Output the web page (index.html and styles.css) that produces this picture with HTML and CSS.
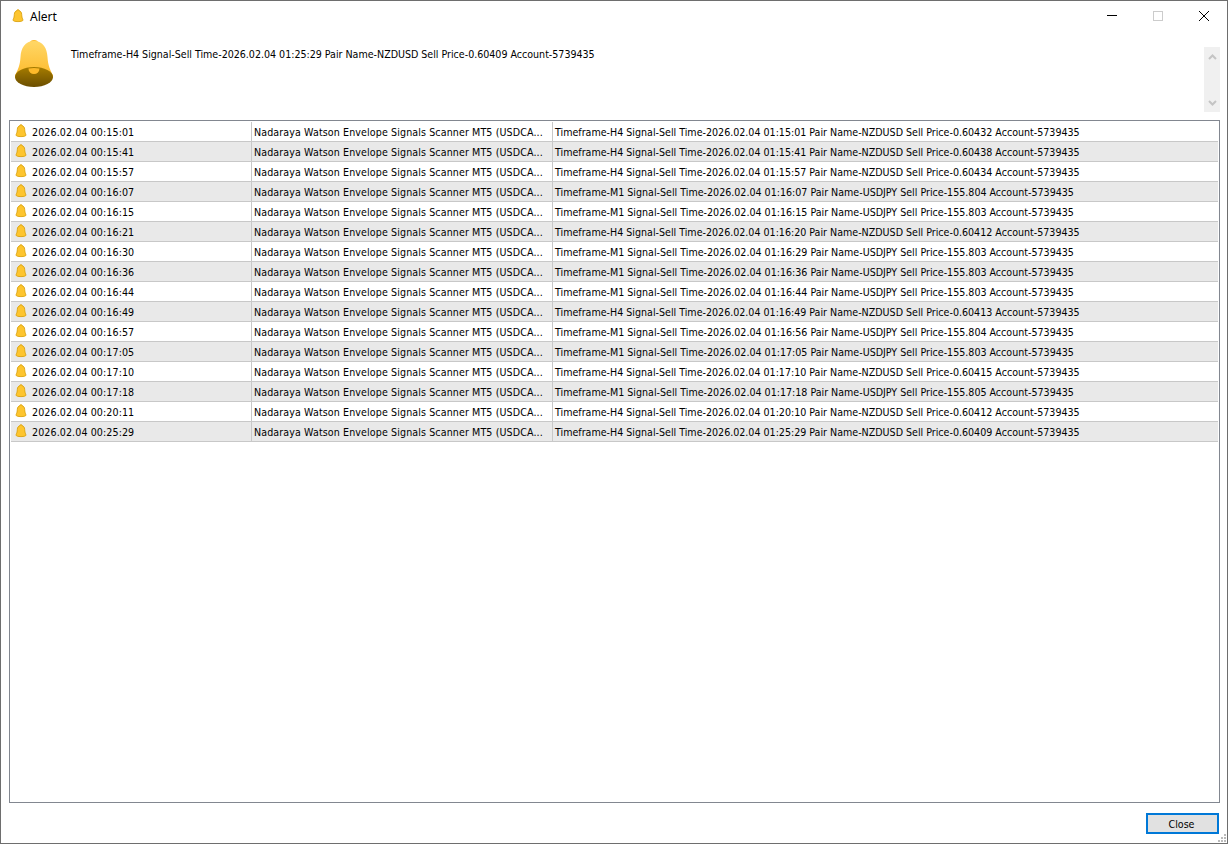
FILE: index.html
```html
<!DOCTYPE html>
<html lang="en">
<head>
<meta charset="utf-8">
<title>Alert</title>
<link rel="stylesheet" href="styles.css">
</head>
<body>
<svg class="defs" width="0" height="0">
<defs>
<linearGradient id="bg" x1="0" y1="0" x2="0" y2="1"><stop offset="0" stop-color="#ffd766"/><stop offset="1" stop-color="#fdb92a"/></linearGradient>
<linearGradient id="bi" x1="0" y1="0" x2="0" y2="1"><stop offset="0" stop-color="#a67c00"/><stop offset="1" stop-color="#6b4e00"/></linearGradient>
<symbol id="bell-big" viewBox="0 0 40 48">
<ellipse cx="20" cy="3" rx="4" ry="3" fill="#fdb92a"/>
<path d="M20 1C11 1 7 8 6.500 17 6 26 4 29 1 35.500V38H39V35.500C36 29 34 26 33.500 17 33 8 29 1 20 1Z" fill="url(#bg)"/>
<ellipse cx="20" cy="37" rx="19" ry="10" fill="url(#bi)"/>
<path d="M14.500 28.500a5.500 5.500 0 0 0 11 0 19 10 0 0 0-11 0Z" fill="#fdb92a"/>
</symbol>
<symbol id="bell" viewBox="0 0 12 14">
<path d="M6 .6C5.400 .6 5.100 1 5 1.600 3.400 2 2.400 3.400 2.300 5.400 2.200 7.600 1.900 9 1.200 10.200V11.400C1.200 12 3 12.600 6 12.600 9 12.600 10.800 12 10.800 11.400V10.200C10.100 9 9.800 7.600 9.700 5.400 9.600 3.400 8.600 2 7 1.600 6.900 1 6.600 .6 6 .6Z" fill="#fdc52f" stroke="#d59a00" stroke-width=".8"/>
</symbol>
</defs>
</svg>
<div class="window">
  <header class="titlebar">
    <svg class="title-icon"><use href="#bell"/></svg>
    <span class="title">Alert</span>
    <div class="controls">
      <span class="ctl"><svg width="12" height="12"><path d="M1 5.500H11" stroke="#000"/></svg></span>
      <span class="ctl"><svg width="12" height="12"><rect x="1.500" y="1.500" width="9" height="9" fill="none" stroke="#ccc"/></svg></span>
      <span class="ctl"><svg width="12" height="12"><path d="M1 1L11 11M11 1L1 11" stroke="#000"/></svg></span>
    </div>
  </header>
  <section class="message">
    <svg class="big-bell"><use href="#bell-big"/></svg>
    <p class="msg-text">Timeframe-H4 Signal-Sell Time-2026.02.04 01:25:29 Pair Name-NZDUSD Sell Price-0.60409 Account-5739435</p>
    <div class="scroll">
      <svg width="9" height="6"><path d="M1 5L4.500 1.500 8 5" fill="none" stroke="#c4c4c4" stroke-width="2"/></svg>
      <svg width="9" height="6"><path d="M1 1L4.500 4.500 8 1" fill="none" stroke="#c4c4c4" stroke-width="2"/></svg>
    </div>
  </section>
  <main class="list" id="list"></main>
  <footer class="footer">
    <button class="close">Close</button>
    <svg class="grip" width="8" height="8"><path d="M6 0h2v2H6zM3 3h2v2H3zM6 3h2v2H6zM0 6h2v2H0zM3 6h2v2H3zM6 6h2v2H6z" fill="#bbb"/></svg>
  </footer>
</div>
<script src="app.js"></script>
</body>
</html>
```
FILE: styles.css
```css
* { box-sizing: border-box; }
html, body { margin: 0; height: 100%; }
body { font-family: "DejaVu Sans Condensed", "DejaVu Sans", sans-serif; font-stretch: condensed; font-size: 10.6px; color: #000; background: #fff; overflow: hidden; }
.defs { position: absolute; }
.window { width: 1228px; height: 844px; border: 1px solid #6e6e6e; background: #fff; display: flex; flex-direction: column; }
.titlebar { height: 30px; flex: none; display: flex; align-items: center; padding-left: 11px; }
.title-icon { width: 12px; height: 14px; margin-right: 6px; margin-top: -1px; }
.title { font-family: "Noto Sans", sans-serif; font-stretch: normal; font-size: 12px; }
.controls { margin-left: auto; display: flex; }
.ctl { width: 46px; height: 30px; display: flex; align-items: center; justify-content: center; }
.message { height: 89px; flex: none; display: flex; padding-left: 13px; position: relative; }
.big-bell { width: 40px; height: 48px; margin-top: 9px; }
.msg-text { margin: 14px 0 0 17px; line-height: 18px; white-space: nowrap; letter-spacing: -.01px; }
.scroll { margin: 16px 7px 0 auto; width: 16px; height: 65px; background: #f0f0f0; display: flex; flex-direction: column; justify-content: space-between; align-items: center; padding: 7px 0 6px; }
.list { height: 683px; flex: none; margin: 0 7px 0 8px; border: 1px solid #828790; padding: 1px 1px 0; }
.row { height: 20px; display: flex; border-bottom: 1px solid #c8c8c8; line-height: 19px; white-space: nowrap; }
.row:nth-child(even) { background: #e9e9e9; }
.cell { overflow: hidden; border-right: 1px solid #c8c8c8; padding: 1px 0 0 2px; }
.c1 { width: 241px; padding-left: 4px; display: flex; align-items: center; letter-spacing: .1px; }
.c2 { width: 301px; letter-spacing: .11px; }
.c3 { flex: 1; border-right: 0; }
.row-bell { width: 12px; height: 14px; margin-right: 5px; margin-top: -3px; }
.footer { flex: 1; display: flex; justify-content: flex-end; align-items: flex-start; padding: 10px 8px 0 0; position: relative; }
.close { width: 73px; height: 21px; padding: 0 2px 0 0; background: #e1e1e1; border: 2px solid #0078d7; font: inherit; color: #000; }
.grip { position: absolute; right: 1px; bottom: 1px; }
```
FILE: app.js
```js
const rows = [
["00:15:01","H4","01:15:01","NZDUSD","0.60432"],
["00:15:41","H4","01:15:41","NZDUSD","0.60438"],
["00:15:57","H4","01:15:57","NZDUSD","0.60434"],
["00:16:07","M1","01:16:07","USDJPY","155.804"],
["00:16:15","M1","01:16:15","USDJPY","155.803"],
["00:16:21","H4","01:16:20","NZDUSD","0.60412"],
["00:16:30","M1","01:16:29","USDJPY","155.803"],
["00:16:36","M1","01:16:36","USDJPY","155.803"],
["00:16:44","M1","01:16:44","USDJPY","155.803"],
["00:16:49","H4","01:16:49","NZDUSD","0.60413"],
["00:16:57","M1","01:16:56","USDJPY","155.804"],
["00:17:05","M1","01:17:05","USDJPY","155.803"],
["00:17:10","H4","01:17:10","NZDUSD","0.60415"],
["00:17:18","M1","01:17:18","USDJPY","155.805"],
["00:20:11","H4","01:20:10","NZDUSD","0.60412"],
["00:25:29","H4","01:25:29","NZDUSD","0.60409"]
];
document.getElementById("list").innerHTML = rows.map(r => `<div class="row"><div class="cell c1"><svg class="row-bell"><use href="#bell"/></svg>2026.02.04 ${r[0]}</div><div class="cell c2">Nadaraya Watson Envelope Signals Scanner MT5 (USDCA...</div><div class="cell c3">Timeframe-${r[1]} Signal-Sell Time-2026.02.04 ${r[2]} Pair Name-${r[3]} Sell Price-${r[4]} Account-5739435</div></div>`).join("");
```
